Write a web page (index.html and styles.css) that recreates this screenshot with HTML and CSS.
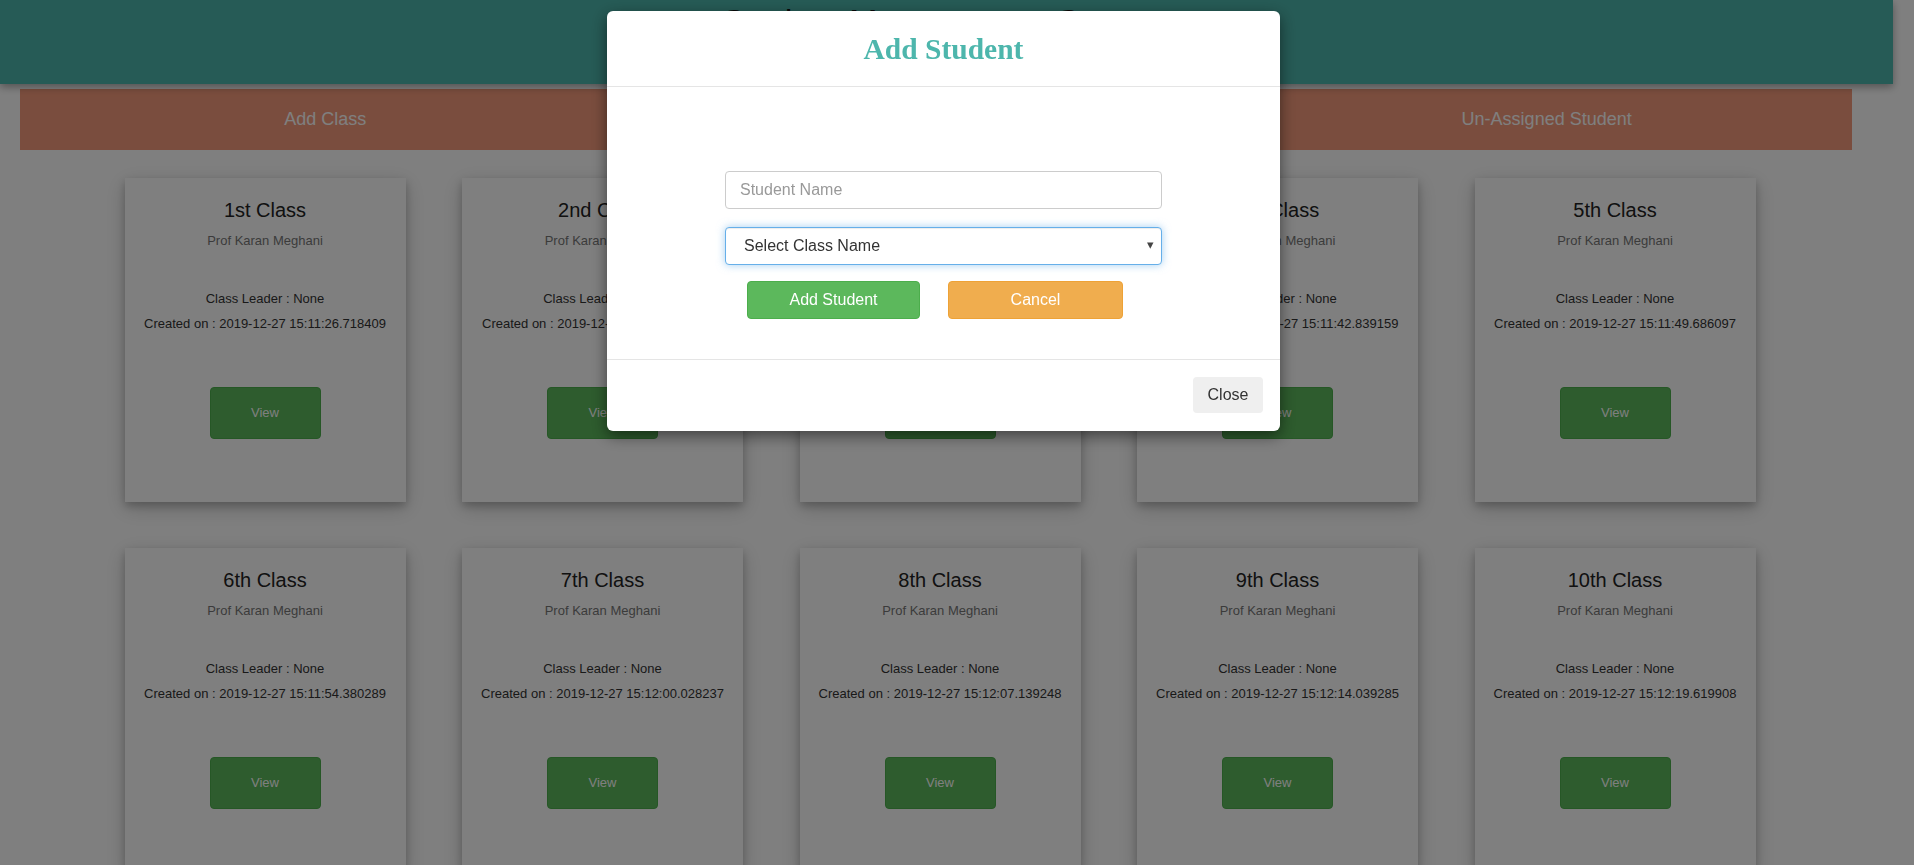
FILE: index.html
```html
<!DOCTYPE html>
<html lang="en">
<head>
<meta charset="utf-8">
<title>Student Management System</title>
<link rel="stylesheet" href="styles.css">
</head>
<body>
<div class="page">
  <header class="topbar">
    <h1 class="topbar-title">Student Management System</h1>
  </header>
  <nav class="menu">
    <a class="menu-item">Add Class</a>
    <a class="menu-item">Add Student</a>
    <a class="menu-item">Un-Assigned Student</a>
  </nav>
  <main class="grid">
    <div class="card"><h4 class="card-title">1st Class</h4><p class="prof">Prof Karan Meghani</p><p class="info first">Class Leader : None</p><p class="info">Created on : 2019-12-27 15:11:26.718409</p><button class="view">View</button></div>
    <div class="card"><h4 class="card-title">2nd Class</h4><p class="prof">Prof Karan Meghani</p><p class="info first">Class Leader : None</p><p class="info">Created on : 2019-12-27 15:11:31.502114</p><button class="view">View</button></div>
    <div class="card"><h4 class="card-title">3rd Class</h4><p class="prof">Prof Karan Meghani</p><p class="info first">Class Leader : None</p><p class="info">Created on : 2019-12-27 15:11:36.914532</p><button class="view">View</button></div>
    <div class="card"><h4 class="card-title">4th Class</h4><p class="prof">Prof Karan Meghani</p><p class="info first">Class Leader : None</p><p class="info">Created on : 2019-12-27 15:11:42.839159</p><button class="view">View</button></div>
    <div class="card"><h4 class="card-title">5th Class</h4><p class="prof">Prof Karan Meghani</p><p class="info first">Class Leader : None</p><p class="info">Created on : 2019-12-27 15:11:49.686097</p><button class="view">View</button></div>
    <div class="card"><h4 class="card-title">6th Class</h4><p class="prof">Prof Karan Meghani</p><p class="info first">Class Leader : None</p><p class="info">Created on : 2019-12-27 15:11:54.380289</p><button class="view">View</button></div>
    <div class="card"><h4 class="card-title">7th Class</h4><p class="prof">Prof Karan Meghani</p><p class="info first">Class Leader : None</p><p class="info">Created on : 2019-12-27 15:12:00.028237</p><button class="view">View</button></div>
    <div class="card"><h4 class="card-title">8th Class</h4><p class="prof">Prof Karan Meghani</p><p class="info first">Class Leader : None</p><p class="info">Created on : 2019-12-27 15:12:07.139248</p><button class="view">View</button></div>
    <div class="card"><h4 class="card-title">9th Class</h4><p class="prof">Prof Karan Meghani</p><p class="info first">Class Leader : None</p><p class="info">Created on : 2019-12-27 15:12:14.039285</p><button class="view">View</button></div>
    <div class="card"><h4 class="card-title">10th Class</h4><p class="prof">Prof Karan Meghani</p><p class="info first">Class Leader : None</p><p class="info">Created on : 2019-12-27 15:12:19.619908</p><button class="view">View</button></div>
  </main>
</div>

<div class="backdrop"></div>

<div class="modal">
  <div class="modal-header">
    <h3 class="modal-title">Add Student</h3>
  </div>
  <div class="modal-body">
    <div class="form">
      <input class="field" type="text" placeholder="Student Name">
      <div class="select-wrap">
        <select class="field select">
          <option>Select Class Name</option>
        </select>
        <span class="select-arrow">▾</span>
      </div>
      <div class="actions">
        <button class="btn btn-add">Add Student</button>
        <button class="btn btn-cancel">Cancel</button>
      </div>
    </div>
  </div>
  <div class="modal-footer">
    <button class="btn-close">Close</button>
  </div>
</div>
</body>
</html>
```

FILE: styles.css
```css
* { box-sizing: border-box; }

html, body {
  margin: 0;
  padding: 0;
  height: 100%;
  overflow: hidden;
  background: #ffffff;
  font-family: "Liberation Sans", Arial, sans-serif;
  color: #333;
}

.page {
  width: 1893px;
}

.topbar {
  height: 84px;
  background: #4db6ac;
  box-shadow: 0 3px 8px rgba(0, 0, 0, 0.35);
  position: relative;
  z-index: 1;
}

.topbar-title {
  margin: 0;
  font-size: 34px;
  line-height: 40px;
  font-weight: normal;
  color: #111;
  text-align: center;
  padding-top: 1px;
}

.menu {
  margin: 5px 0 0 20px;
  width: 1832px;
  height: 61px;
  background: #f59b7c;
  display: grid;
  grid-template-columns: repeat(3, 1fr);
  align-items: center;
}

.menu-item {
  text-align: center;
  color: #ffffff;
  font-size: 18px;
}

.grid {
  margin: 28px 0 0 124.5px;
  display: grid;
  grid-template-columns: repeat(5, 281px);
  column-gap: 56.5px;
  row-gap: 46px;
}

.card {
  height: 324px;
  background: #fff;
  box-shadow: 0 4px 8px 0 rgba(0, 0, 0, 0.2), 0 6px 20px 0 rgba(0, 0, 0, 0.19);
  text-align: center;
  padding-top: 21px;
}

.card-title {
  margin: 0;
  font-size: 20px;
  line-height: 23px;
  font-weight: normal;
  color: #222;
}

.prof {
  margin: 11px 0 0;
  font-size: 13px;
  line-height: 15px;
  color: #777;
}

.info {
  margin: 0;
  font-size: 13px;
  line-height: 25px;
  color: #333;
}

.info.first {
  margin-top: 38px;
}

.view {
  margin-top: 51px;
  width: 111px;
  height: 52px;
  border: 1px solid #4cae4c;
  border-radius: 4px;
  background: #5cb85c;
  color: #fff;
  font-family: "Liberation Sans", Arial, sans-serif;
  font-size: 13px;
  padding: 0 0 2px;
}

.backdrop {
  position: fixed;
  inset: 0;
  background: rgba(0, 0, 0, 0.5);
  z-index: 10;
}

.modal {
  position: fixed;
  top: 11px;
  left: 607px;
  width: 673px;
  background: #fff;
  border-radius: 6px;
  box-shadow: 0 5px 15px rgba(0, 0, 0, 0.5);
  z-index: 20;
}

.modal-header {
  padding: 21px 15px 20px;
  border-bottom: 1px solid #e5e5e5;
}

.modal-title {
  margin: 0;
  font-family: "Liberation Serif", "Times New Roman", serif;
  font-weight: bold;
  font-size: 29.5px;
  line-height: 34px;
  color: #4db6ac;
  text-align: center;
}

.modal-body {
  padding: 84px 0 40px;
}

.form {
  width: 437px;
  margin: 0 auto;
}

.field {
  display: block;
  width: 100%;
  height: 38px;
  border: 1px solid #ccc;
  border-radius: 4px;
  background: #fff;
  font-family: "Liberation Sans", Arial, sans-serif;
  font-size: 16px;
  color: #333;
  padding: 0 14px;
  outline: none;
}

.field::placeholder {
  color: #999;
}

.select-wrap {
  position: relative;
  margin-top: 18px;
}

.select {
  appearance: none;
  -webkit-appearance: none;
  padding: 0 18px 2px;
  border-color: #66afe9;
  box-shadow: inset 0 1px 1px rgba(0, 0, 0, 0.075), 0 0 8px rgba(102, 175, 233, 0.6);
  color: #333;
}

.select-arrow {
  position: absolute;
  right: 8px;
  top: 10px;
  font-size: 13px;
  line-height: 16px;
  color: #444;
  pointer-events: none;
}

.actions {
  display: flex;
  gap: 28px;
  padding-left: 22px;
  margin-top: 16px;
}

.btn {
  height: 38px;
  border-radius: 4px;
  font-family: "Liberation Sans", Arial, sans-serif;
  font-size: 16px;
  color: #fff;
  padding: 0;
}

.btn-add {
  width: 173px;
  background: #5cb85c;
  border: 1px solid #4cae4c;
}

.btn-cancel {
  width: 175px;
  background: #f0ad4e;
  border: 1px solid #eea236;
}

.modal-footer {
  border-top: 1px solid #e5e5e5;
  padding: 17px 17px 18px;
  display: flex;
  justify-content: flex-end;
}

.btn-close {
  width: 70px;
  height: 36px;
  border: none;
  border-radius: 4px;
  background: #efefef;
  font-family: "Liberation Sans", Arial, sans-serif;
  font-size: 16px;
  color: #333;
}
```
